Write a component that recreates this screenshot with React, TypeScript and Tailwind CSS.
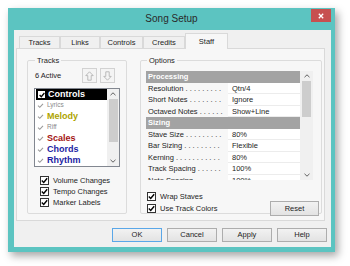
import React from 'react'

const tabs = [
  { name: 'Tracks', w: 'w-[41px]' },
  { name: 'Links', w: 'w-[40px]' },
  { name: 'Controls', w: 'w-[43px]' },
  { name: 'Credits', w: 'w-[42px]' },
  { name: 'Staff', w: 'w-[43px]', active: true },
]

const tracks = [
  { name: 'Controls', cls: 'font-bold text-[9px] text-white', selected: true },
  { name: 'Lyrics', cls: 'text-[6.5px] text-[#8a8a8a]' },
  { name: 'Melody', cls: 'font-bold text-[9px] text-[#aea300]' },
  { name: 'Riff', cls: 'text-[6.5px] text-[#8a8a8a]' },
  { name: 'Scales', cls: 'font-bold text-[9px] text-[#a31414]' },
  { name: 'Chords', cls: 'font-bold text-[9px] text-[#1c1ca3]' },
  { name: 'Rhythm', cls: 'font-bold text-[9px] text-[#1c1ca3]' },
]

// dots = number of leader dots after the label, so the text ends before the value column
const options = [
  { header: 'Processing' },
  { label: 'Resolution', value: 'Qtn/4', dots: 9 },
  { label: 'Short Notes', value: 'Ignore', dots: 8 },
  { label: 'Octaved Notes', value: 'Show+Line', dots: 6 },
  { header: 'Sizing' },
  { label: 'Stave Size', value: '80%', dots: 9 },
  { label: 'Bar Sizing', value: 'Flexible', dots: 9 },
  { label: 'Kerning', value: '80%', dots: 11 },
  { label: 'Track Spacing', value: '100%', dots: 6 },
  { label: 'Note Spacing', value: '100%', dots: 6 },
]

function Chevron({ down }: { down?: boolean }) {
  return (
    <svg width="6" height="4" viewBox="0 0 6 4">
      <path d={down ? 'M0.5 0.8L3 3.2L5.5 0.8' : 'M0.5 3.2L3 0.8L5.5 3.2'} fill="none" stroke="#606060" strokeWidth="1" />
    </svg>
  )
}

function Scrollbar({ thumb }: { thumb: string }) {
  // thumb is a full height class, e.g. h-[43px]
  return (
    <div className="flex flex-1 flex-col items-center bg-[#f0f0f0]">
      <div className="flex h-[10px] items-center"><Chevron /></div>
      <div className={`w-[9px] bg-[#cdcdcd] ${thumb}`} />
      <div className="flex-1" />
      <div className="flex h-[10px] items-center"><Chevron down /></div>
    </div>
  )
}

function CheckBox({ label }: { label: string }) {
  return (
    <div className="flex h-[11px] items-center gap-[4px]">
      <span className="flex h-[9px] w-[9px] items-center justify-center border border-[#333] bg-white">
        <svg width="7" height="7" viewBox="0 0 7 7">
          <path d="M0.8 3.6L2.7 5.4L6.2 1.2" fill="none" stroke="#000" strokeWidth="1.4" />
        </svg>
      </span>
      <span>{label}</span>
    </div>
  )
}

function ArrowButton({ down }: { down?: boolean }) {
  return (
    <div className="flex h-[15px] w-[15px] items-center justify-center border border-[#d2d2d2] bg-[#f4f4f4]">
      <svg width="9" height="10" viewBox="0 0 9 10" className={down ? 'rotate-180' : ''}>
        <path d="M4.5 0.8L8.2 4.6H6.2V9.2H2.8V4.6H0.8Z" fill="none" stroke="#b4b4b4" strokeWidth="0.9" />
      </svg>
    </div>
  )
}

function DialogButton({ label, primary }: { label: string, primary?: boolean }) {
  return (
    <div
      className={`flex h-[14px] w-[50px] items-center justify-center border bg-gradient-to-b from-[#f2f2f2] to-[#e3e3e3] ${
        primary ? 'border-[#5aa7e8]' : 'border-[#adadad]'
      }`}
    >
      {label}
    </div>
  )
}

export default function App() {
  return (
    <div className="h-[266px] w-[350px] overflow-hidden bg-white pl-[8px] pt-[8px] font-['Liberation_Sans',Arial,sans-serif] text-[7.5px] leading-none text-[#1e1e1e]">
      <div className="flex h-[244px] w-[327px] flex-col bg-[#5cc4c1] shadow-[3px_4px_8px_rgba(0,0,0,0.35)]">
        {/* title bar */}
        <div className="relative flex h-[22px] items-center justify-center">
          <span className="text-[10px] text-[#2a2a2a]">Song Setup</span>
          <div className="absolute right-[4px] top-[1px] flex h-[13px] w-[20px] items-center justify-center bg-[#c75050]">
            <svg width="6" height="6" viewBox="0 0 6 6">
              <path d="M0.8 0.8L5.2 5.2M5.2 0.8L0.8 5.2" stroke="#fff" strokeWidth="1.3" />
            </svg>
          </div>
        </div>

        {/* client area */}
        <div className="mb-[5px] ml-[6px] mr-[4px] flex flex-1 flex-col bg-[#f0f0f0] pl-[2px] pr-[4px] pt-[3px]">
          <div className="mr-[2px] flex flex-col">
            {/* tabs */}
            <div className="ml-[3px] flex h-[15px] items-end">
              {tabs.map((t) => (
                <div
                  key={t.name}
                  className={`flex items-center justify-center border border-[#d9d9d9] ${t.w} ${
                    t.active ? 'relative z-10 -mb-px h-[16px] border-b-0 bg-[#f7f7f7]' : 'h-[12px] border-b-0 bg-[#f0f0f0]'
                  }`}
                >
                  {t.name}
                </div>
              ))}
            </div>

            {/* panel */}
            <div className="flex h-[173px] gap-[13px] border border-[#d9d9d9] bg-[#f7f7f7] pl-[10px] pt-[7px]">
              {/* Tracks group */}
              <fieldset className="h-[158px] w-[100px] rounded-[2px] border border-[#dcdcdc] pl-[6px]">
                <legend className="ml-[1px] px-[2px] leading-[9px]">Tracks</legend>
                <div className="mt-[3px] flex h-[15px] items-center">
                  <span className="ml-[1px] w-[47px]">6 Active</span>
                  <div className="flex gap-[3px]">
                    <ArrowButton />
                    <ArrowButton down />
                  </div>
                </div>

                <div className="mt-[5px] flex h-[79px] w-[86px] overflow-hidden border border-[#828790] bg-white">
                  <div className="flex flex-1 flex-col">
                    {tracks.map((tr) => (
                      <div
                        key={tr.name}
                        className={`flex h-[11px] shrink-0 items-center gap-[3px] pl-[2px] ${tr.selected ? 'ml-[1px] bg-black' : ''}`}
                      >
                        {tr.selected ? (
                          <span className="flex h-[7px] w-[7px] items-center justify-center bg-white">
                            <svg width="6" height="6" viewBox="0 0 6 6">
                              <path d="M0.6 3L2.3 4.7L5.4 1" fill="none" stroke="#000" strokeWidth="1.3" />
                            </svg>
                          </span>
                        ) : (
                          <svg width="7" height="7" viewBox="0 0 7 7">
                            <path d="M1 3.6L2.8 5.3L6 1.8" fill="none" stroke="#9a9a9a" strokeWidth="1.1" />
                          </svg>
                        )}
                        <span className={`whitespace-nowrap ${tr.cls}`}>{tr.name}</span>
                      </div>
                    ))}
                  </div>
                  <div className="flex w-[12px]">
                    <Scrollbar thumb="h-[43px]" />
                  </div>
                </div>

                <div className="ml-[6px] mt-[8px] flex flex-col">
                  <CheckBox label="Volume Changes" />
                  <CheckBox label="Tempo Changes" />
                  <CheckBox label="Marker Labels" />
                </div>
              </fieldset>

              {/* Options group */}
              <fieldset className="h-[158px] w-[182px] rounded-[2px] border border-[#dcdcdc] pl-[5px]">
                <legend className="ml-[1px] px-[2px] leading-[9px]">Options</legend>
                <div className="mt-[6px] flex h-[109px] w-[167px] overflow-hidden">
                  <div className="flex w-[154px] flex-col">
                    {options.map((o, i) =>
                      o.header ? (
                        <div key={i} className="flex h-[11.5px] shrink-0 items-center bg-[#a3a3a3] pl-[2px] font-bold text-white">
                          {o.header}
                        </div>
                      ) : (
                        <div key={i} className="flex h-[11.5px] shrink-0">
                          <div className="w-[82px] whitespace-nowrap pl-[2px] pt-[2px]">
                            {o.label} {'. '.repeat(o.dots ?? 0).trim()}
                          </div>
                          <div className="flex-1 border-b border-[#ececec] bg-white pl-[4px] pt-[2px]">{o.value}</div>
                        </div>
                      )
                    )}
                  </div>
                  <div className="flex w-[13px]">
                    <Scrollbar thumb="h-[36px]" />
                  </div>
                </div>

                <div className="mt-[11px] flex items-end pr-[2px]">
                  <div className="ml-[1px] flex flex-1 flex-col gap-px">
                    <CheckBox label="Wrap Staves" />
                    <CheckBox label="Use Track Colors" />
                  </div>
                  <div className="mb-[-2px] flex h-[15px] w-[49px] items-center justify-center border border-[#adadad] bg-gradient-to-b from-[#f2f2f2] to-[#e3e3e3]">
                    Reset
                  </div>
                </div>
              </fieldset>
            </div>
          </div>

          {/* dialog buttons */}
          <div className="mt-[7px] flex justify-end gap-[5px]">
            <DialogButton label="OK" primary />
            <DialogButton label="Cancel" />
            <DialogButton label="Apply" />
            <DialogButton label="Help" />
          </div>
        </div>
      </div>
    </div>
  )
}
